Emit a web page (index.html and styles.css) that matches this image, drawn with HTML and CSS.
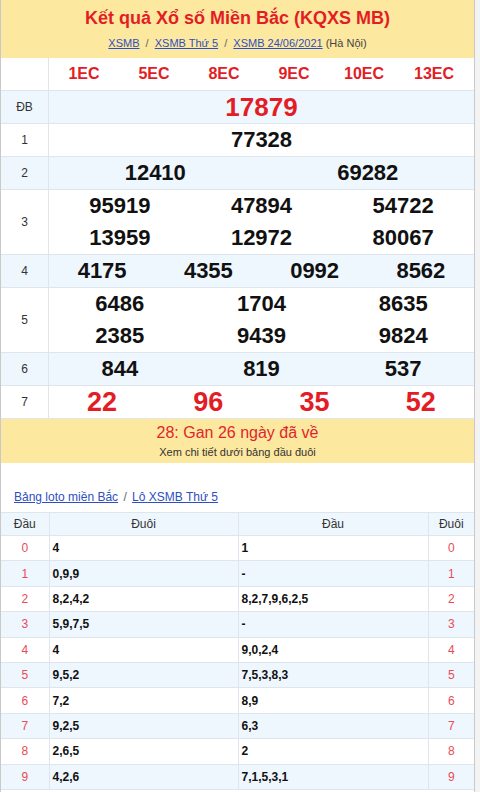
FILE: index.html
```html
<!DOCTYPE html>
<html lang="vi">
<head>
<meta charset="utf-8">
<title>KQXS MB</title>
<link rel="stylesheet" href="styles.css">
</head>
<body>
<div class="page">
  <div class="head">
    <h1 class="title">Kết quả Xổ số Miền Bắc (KQXS MB)</h1>
    <div class="crumbs"><a href="#">XSMB</a> <span class="sep">/</span> <a href="#">XSMB Thứ 5</a> <span class="sep">/</span> <a href="#">XSMB 24/06/2021</a> (Hà Nội)</div>
  </div>

  <div class="results">
    <div class="row">
      <div class="lbl"></div>
      <div class="cells codes"><span>1EC</span><span>5EC</span><span>8EC</span><span>9EC</span><span>10EC</span><span>13EC</span></div>
    </div>
    <div class="row alt">
      <div class="lbl">ĐB</div>
      <div class="cells c1"><span class="num db">17879</span></div>
    </div>
    <div class="row">
      <div class="lbl">1</div>
      <div class="cells c1"><span class="num">77328</span></div>
    </div>
    <div class="row alt">
      <div class="lbl">2</div>
      <div class="cells c2"><span class="num">12410</span><span class="num">69282</span></div>
    </div>
    <div class="row">
      <div class="lbl">3</div>
      <div class="cells c3"><span class="num">95919</span><span class="num">47894</span><span class="num">54722</span><span class="num">13959</span><span class="num">12972</span><span class="num">80067</span></div>
    </div>
    <div class="row alt">
      <div class="lbl">4</div>
      <div class="cells c4"><span class="num">4175</span><span class="num">4355</span><span class="num">0992</span><span class="num">8562</span></div>
    </div>
    <div class="row">
      <div class="lbl">5</div>
      <div class="cells c3"><span class="num">6486</span><span class="num">1704</span><span class="num">8635</span><span class="num">2385</span><span class="num">9439</span><span class="num">9824</span></div>
    </div>
    <div class="row alt">
      <div class="lbl">6</div>
      <div class="cells c3"><span class="num">844</span><span class="num">819</span><span class="num">537</span></div>
    </div>
    <div class="row">
      <div class="lbl">7</div>
      <div class="cells c4"><span class="num red">22</span><span class="num red">96</span><span class="num red">35</span><span class="num red">52</span></div>
    </div>
  </div>

  <div class="notice">
    <div class="gan">28: Gan 26 ngày đã về</div>
    <div class="hint">Xem chi tiết dưới bảng đầu đuôi</div>
  </div>

  <div class="loto-links"><a href="#">Bảng loto miền Bắc</a> <span class="sep">/</span> <a href="#">Lô XSMB Thứ 5</a></div>

  <table class="loto">
    <colgroup><col class="k1"><col class="v1"><col class="v2"><col class="k2"></colgroup>
    <thead>
      <tr><th>Đầu</th><th>Đuôi</th><th>Đầu</th><th>Đuôi</th></tr>
    </thead>
    <tbody>
      <tr><td class="k">0</td><td class="v">4</td><td class="v">1</td><td class="k">0</td></tr>
      <tr><td class="k">1</td><td class="v">0,9,9</td><td class="v">-</td><td class="k">1</td></tr>
      <tr><td class="k">2</td><td class="v">8,2,4,2</td><td class="v">8,2,7,9,6,2,5</td><td class="k">2</td></tr>
      <tr><td class="k">3</td><td class="v">5,9,7,5</td><td class="v">-</td><td class="k">3</td></tr>
      <tr><td class="k">4</td><td class="v">4</td><td class="v">9,0,2,4</td><td class="k">4</td></tr>
      <tr><td class="k">5</td><td class="v">9,5,2</td><td class="v">7,5,3,8,3</td><td class="k">5</td></tr>
      <tr><td class="k">6</td><td class="v">7,2</td><td class="v">8,9</td><td class="k">6</td></tr>
      <tr><td class="k">7</td><td class="v">9,2,5</td><td class="v">6,3</td><td class="k">7</td></tr>
      <tr><td class="k">8</td><td class="v">2,6,5</td><td class="v">2</td><td class="k">8</td></tr>
      <tr><td class="k">9</td><td class="v">4,2,6</td><td class="v">7,1,5,3,1</td><td class="k">9</td></tr>
    </tbody>
  </table>
</div>
</body>
</html>
```

FILE: styles.css
```css
* { box-sizing: border-box; }

html, body {
  margin: 0;
  padding: 0;
}

body {
  background: #f3f3f3;
  font-family: "Liberation Sans", Arial, sans-serif;
  color: #222;
}

.page {
  width: 475px;
  background: #fff;
  border-left: 1px solid #c9c9c9;
  border-right: 1px solid #c9c9c9;
  padding-bottom: 3px;
}

a {
  color: #2e4fc0;
  text-decoration: underline;
}

.sep {
  color: #666;
  margin: 0 2px;
}

/* header */
.head {
  background: #fde89f;
  height: 58px;
  text-align: center;
  padding-top: 7px;
}

.title {
  margin: 0;
  font-size: 18px;
  line-height: 22px;
  font-weight: bold;
  color: #e31d25;
}

.crumbs {
  margin-top: 6px;
  font-size: 11px;
  line-height: 16px;
  color: #444;
}

.crumbs .sep {
  margin: 0 3px;
}

/* results */
.row {
  display: flex;
  border-bottom: 1px solid #dfe5ec;
}

.row.alt {
  background: #eef6fe;
}

.lbl {
  width: 48px;
  flex: none;
  border-right: 1px solid #dfe5ec;
  display: flex;
  align-items: center;
  justify-content: center;
  font-size: 12px;
  color: #333;
  background: #fff;
}

.row.alt .lbl {
  background: #eef6fe;
}

.cells {
  flex: 1;
  display: grid;
}

.cells > span {
  height: 32px;
  line-height: 32px;
  text-align: center;
}

.codes {
  grid-template-columns: repeat(6, 70px);
  padding-right: 5px;
}

.codes > span {
  color: #e31d25;
  font-weight: bold;
  font-size: 16px;
}

.c1 { grid-template-columns: 1fr; }
.c2 { grid-template-columns: repeat(2, 1fr); }
.c3 { grid-template-columns: repeat(3, 1fr); }
.c4 { grid-template-columns: repeat(4, 1fr); }

.num {
  font-weight: bold;
  font-size: 22px;
  color: #111;
}

.num.db {
  font-size: 26px;
  color: #e31d25;
}

.num.red {
  font-size: 27px;
  color: #e31d25;
}

/* notice */
.notice {
  background: #fde89f;
  height: 44px;
  text-align: center;
  padding-top: 4px;
}

.gan {
  font-size: 16px;
  line-height: 20px;
  color: #e0262d;
}

.hint {
  font-size: 11px;
  line-height: 16px;
  margin-top: 1px;
  color: #333;
}

/* loto */
.loto-links {
  padding: 26px 0 0 13px;
  height: 49px;
  font-size: 12px;
  line-height: 16px;
}

.loto {
  width: 473px;
  border-collapse: collapse;
  table-layout: fixed;
  font-size: 12px;
}

.loto col.k1 { width: 48px; }
.loto col.v1 { width: 189px; }
.loto col.v2 { width: 190px; }
.loto col.k2 { width: 46px; }

.loto th,
.loto td {
  border: 1px solid #dfe5ec;
  padding: 0;
  height: 25.4px;
}

.loto th:first-child,
.loto td:first-child { border-left: 0; }
.loto th:last-child,
.loto td:last-child { border-right: 0; }

.loto th {
  height: 23px;
  font-weight: normal;
  color: #333;
  text-align: center;
  background: #eef6fe;
}

.loto tbody tr:nth-child(even) td {
  background: #eef6fe;
}

.loto td.k {
  text-align: center;
  color: #ea4b55;
}

.loto td.v {
  font-weight: bold;
  color: #111;
  padding-left: 3px;
}
```
